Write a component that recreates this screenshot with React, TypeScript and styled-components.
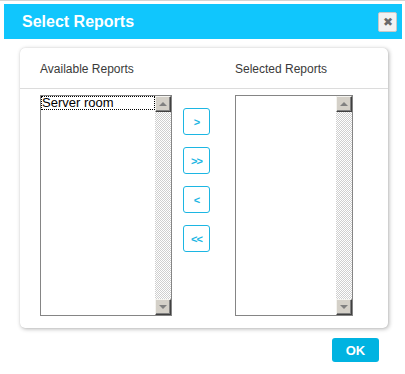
import React from "react";
import styled, { createGlobalStyle } from "styled-components";

const GlobalStyle = createGlobalStyle`
  html, body {
    margin: 0;
    padding: 0;
    background: #fff;
    font-family: "Liberation Sans", Arial, sans-serif;
  }
`;

const Dialog = styled.div`
  width: 405px;
  height: 374px;
  box-sizing: border-box;
  border-top: 1px solid #d4d4d4;
  padding: 3px 3px 0 4px;
  display: flex;
  flex-direction: column;
`;

const TitleBar = styled.div`
  height: 35px;
  background: #10c6fd;
  display: flex;
  align-items: center;
  justify-content: space-between;
  padding: 0 5px 0 18px;
`;

const Title = styled.h1`
  margin: 0;
  font-size: 16px;
  font-weight: bold;
  color: #fff;
  padding-top: 1px;
`;

const CloseButton = styled.button`
  width: 19px;
  height: 20px;
  padding: 0;
  border: 1px solid #c8c8c8;
  border-radius: 2px;
  background: #f2f2f2;
  color: #6a6a6a;
  font-size: 12px;
  line-height: 18px;
  display: flex;
  align-items: center;
  justify-content: center;
`;

const Panel = styled.div`
  margin: 9px 14px 0 16px;
  height: 280px;
  background: #fff;
  border-radius: 5px;
  box-shadow: 1px 1px 4px rgba(0, 0, 0, 0.3), 0 0 1px rgba(0, 0, 0, 0.15);
  display: flex;
  flex-direction: column;
`;

// three columns: left list, move buttons, right list
const Columns = styled.div`
  display: grid;
  grid-template-columns: 132px 27px 132px;
  column-gap: 11px;
  padding: 0 20px;
  & > :nth-child(3) {
    margin-left: 14px;
  }
`;

const HeaderRow = styled(Columns)`
  height: 40px;
  align-items: center;
  border-bottom: 1px solid #dcdcdc;
`;

const Label = styled.div`
  font-size: 12px;
  color: #3a3a3a;
  white-space: nowrap;
  padding-top: 1px;
`;

const Body = styled(Columns)`
  padding-top: 6px;
`;

const ListBox = styled.div`
  height: 219px;
  border: 1px solid #858585;
  display: flex;
  background: #fff;
`;

const Items = styled.div`
  flex: 1;
  display: flex;
  flex-direction: column;
`;

const Item = styled.div<{ $focused?: boolean }>`
  font-size: 13px;
  color: #000;
  height: 14px;
  line-height: 14px;
  padding-left: 1px;
  outline: ${(p) => (p.$focused ? "1px dotted #000" : "none")};
  outline-offset: -1px;
  white-space: nowrap;
`;

const ScrollBar = styled.div`
  width: 16px;
  display: flex;
  flex-direction: column;
`;

const ScrollTrack = styled.div`
  flex: 1;
  background-color: #fff;
  background-image: conic-gradient(
    #cfcfcf 0 25%,
    #fff 0 50%,
    #cfcfcf 0 75%,
    #fff 0
  );
  background-size: 2px 2px;
`;

const ScrollButton = styled.div<{ $down?: boolean }>`
  width: 16px;
  height: 16px;
  box-sizing: border-box;
  background: #d4d0c8;
  border-top: 1px solid #f4f3ef;
  border-left: 1px solid #f4f3ef;
  border-right: 1px solid #404040;
  border-bottom: 1px solid #404040;
  box-shadow: inset -1px -1px 0 #808080;
  display: flex;
  align-items: center;
  justify-content: center;
  &::after {
    content: "";
    width: 0;
    height: 0;
    border-left: 4px solid transparent;
    border-right: 4px solid transparent;
    ${(p) =>
      p.$down
        ? "border-top: 4px solid #808080;"
        : "border-bottom: 4px solid #808080;"}
  }
`;

const MoveButtons = styled.div`
  display: flex;
  flex-direction: column;
  gap: 12px;
  padding-top: 13px;
`;

const MoveButton = styled.button`
  width: 27px;
  height: 27px;
  padding: 0;
  border: 1px solid #1cb6e3;
  border-radius: 3px;
  background: #fff;
  color: #1cb6e3;
  font-family: "Liberation Sans", Arial, sans-serif;
  font-size: 11px;
  font-weight: bold;
  letter-spacing: -1px;
`;

const Footer = styled.div`
  display: flex;
  justify-content: flex-end;
  padding: 10px 23px 0 0;
`;

const OkButton = styled.button`
  width: 47px;
  height: 24px;
  padding: 0;
  border: none;
  border-radius: 3px;
  background: #00b3e1;
  color: #fff;
  font-family: "Liberation Sans", Arial, sans-serif;
  font-size: 13px;
  font-weight: bold;
`;

function List({ items }: { items: string[] }) {
  return (
    <ListBox>
      <Items>
        {items.map((it, i) => (
          <Item key={it} $focused={i === 0}>
            {it}
          </Item>
        ))}
      </Items>
      <ScrollBar>
        <ScrollButton />
        <ScrollTrack />
        <ScrollButton $down />
      </ScrollBar>
    </ListBox>
  );
}

export default function App() {
  return (
    <>
      <GlobalStyle />
      <Dialog>
        <TitleBar>
          <Title>Select Reports</Title>
          <CloseButton>✖</CloseButton>
        </TitleBar>
        <Panel>
          <HeaderRow>
            <Label>Available Reports</Label>
            <span />
            <Label>Selected Reports</Label>
          </HeaderRow>
          <Body>
            <List items={["Server room"]} />
            <MoveButtons>
              <MoveButton>&gt;</MoveButton>
              <MoveButton>&gt;&gt;</MoveButton>
              <MoveButton>&lt;</MoveButton>
              <MoveButton>&lt;&lt;</MoveButton>
            </MoveButtons>
            <List items={[]} />
          </Body>
        </Panel>
        <Footer>
          <OkButton>OK</OkButton>
        </Footer>
      </Dialog>
    </>
  );
}
